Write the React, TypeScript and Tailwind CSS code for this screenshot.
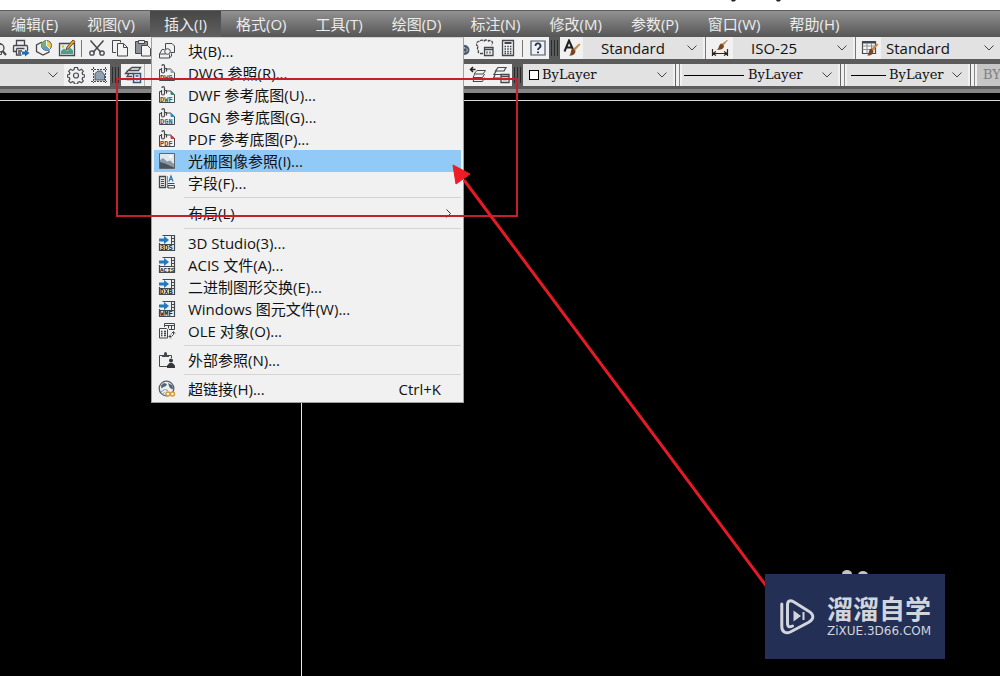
import { useState } from "react";
import type { ReactNode } from "react";

type MenuEntry = {
  label: string;
  icon?: ReactNode;
  shortcut?: string;
  submenu?: boolean;
};

const menus = [
  "编辑(E)",
  "视图(V)",
  "插入(I)",
  "格式(O)",
  "工具(T)",
  "绘图(D)",
  "标注(N)",
  "修改(M)",
  "参数(P)",
  "窗口(W)",
  "帮助(H)",
];

function Icon({ children }: { children: ReactNode }) {
  return (
    <svg width="18" height="18" viewBox="0 0 18 18" fill="none" stroke="#45484d" strokeWidth="1" className="block shrink-0" aria-hidden="true">
      {children}
    </svg>
  );
}

/* ---- menu icons ---- */

function ReferenceIcon({ tag, color, fold }: { tag: string; color: string; fold: string }) {
  return (
    <Icon>
      <path d="M3 5.500H1.500v11h15V8.500l-3.500-3.500H8.500" fill="#f4f4f4" />
      <path d="M13 5v3.500h3.500z" fill={fold} stroke={fold} />
      <path d="M3.500 4v3.500a1.500 1.500 0 0 0 3 0V2a1.300 1.300 0 0 0-2.600 0M6.500 4.500h2v3" strokeWidth="1.200" />
      <text x="2" y="15.500" fontSize="7" fontWeight="700" fontFamily="Liberation Mono, monospace" fill={color} stroke="none">
        {tag}
      </text>
    </Icon>
  );
}

function ImportIcon({ tag }: { tag: string }) {
  return (
    <Icon>
      <path d="M4.500 1.500h12v15h-15V9" fill="#eef0f2" strokeWidth="1.200" />
      <path d="M13.500 2v8M16 4.500h-2M16 7.500h-2" />
      <path d="M1 4.500h5V2l5 4-5 4V7.500H1z" fill="#2479bd" stroke="none" />
      <path d="M2 10.500h14" />
      <text x="2" y="16" fontSize={tag.length > 3 ? 6 : 7} fontWeight="700" fontFamily="Liberation Mono, monospace" fill="#222529" stroke="none">
        {tag}
      </text>
    </Icon>
  );
}

function BlockIcon() {
  return (
    <Icon>
      <path d="M7.500 7V1.500h6.500l2.500 2.500v6.500h-4" />
      <circle cx="9.500" cy="9.500" r="2.800" fill="#f2f2f2" />
      <path d="M6.500 7.500H4L1.500 12v4h10l2-2v-2.500" />
      <path d="M1.500 12h6M11.500 16v-3.500" />
    </Icon>
  );
}

function RasterIcon() {
  return (
    <Icon>
      <path d="M1.500 1.500h15v15h-15z" fill="#dfe8ef" stroke="#5b6670" />
      <path d="M2 8l3-2 4 3.500 3-1 4 3.500v4H2z" fill="#8c98a3" stroke="none" />
      <path d="M2 10l5 1.500 9 4V16H2z" fill="#4b535c" stroke="none" />
      <circle cx="12.500" cy="4.500" r="1.500" fill="#fff" stroke="none" />
    </Icon>
  );
}

function FieldIcon() {
  return (
    <Icon>
      <path d="M1.500 2.500h6v11h-6z" fill="#e4e6e8" strokeWidth="1.300" />
      <path d="M3 5.500h3M3 7.500h3M3 9.500h3M3 11.500h3" />
      <path d="M9.500 2v12" stroke="#8b9096" />
      <path d="M11 7.500L13 2l2 5.500M11.500 5.500h3" stroke="#2479bd" strokeWidth="1.200" />
      <path d="M10 9.500h6.500M10 11.500h6.500v2.500H10z" />
    </Icon>
  );
}

function OleIcon() {
  return (
    <Icon>
      <path d="M6.500 5V1.500h10v6H11M6.500 3.500h10M10.500 3.500v3M13.500 3.500v4" />
      <path d="M1.500 6.500h7l1 1v8.500h-8z" fill="#f2f2f2" />
      <path d="M3 9.500h1.500M6 9.500h2M3 11.500h1.500M6 11.500h2M3 13.500h1.500M6 13.500h2" strokeWidth="1.500" />
      <path d="M11 14.500h2.500l2-2V10M13.500 11.500l2-2 1.500 2M13 12.500l-2 2 2 2" />
    </Icon>
  );
}

function XrefIcon() {
  return (
    <Icon>
      <path d="M4 4.500H1.500v11H9M11 4.500h2.500V7" />
      <path d="M4 6V4h2V2.500a1.500 1.500 0 0 1 3 0V4h2v2z" fill="#45484d" stroke="none" />
      <circle cx="13" cy="9.500" r="2" fill="#33363a" stroke="none" />
      <path d="M9 17v-2.500l2.500-2.500h3l2.500 2.500V17z" fill="#33363a" stroke="none" />
    </Icon>
  );
}

function LinkIcon() {
  return (
    <Icon>
      <circle cx="8.500" cy="8.500" r="7.300" fill="#eceff1" stroke="#5a6068" strokeWidth="1.300" />
      <path d="M3 5.500l3-2.500 3 1-1 2-2.500 1-2 1.500zM10 3l4.500 2.500.5 4-3-1.500-1-2z" fill="#4f6472" stroke="none" />
      <path d="M3 12l3.500-2.500 3.500 1M4.500 14l2-1.500" stroke="#89939b" />
      <circle cx="10" cy="14" r="2" fill="#f2f2f2" stroke="#d49a2a" strokeWidth="1.300" />
      <circle cx="14.500" cy="14" r="2" fill="#f2f2f2" stroke="#d49a2a" strokeWidth="1.300" />
    </Icon>
  );
}

const insertGroups: MenuEntry[][] = [
  [
    { label: "块(B)...", icon: <BlockIcon /> },
    { label: "DWG 参照(R)...", icon: <ReferenceIcon tag="DWG" color="#45484d" fold="#9aa0a6" /> },
    { label: "DWF 参考底图(U)...", icon: <ReferenceIcon tag="DWF" color="#2a6a4b" fold="#3b8a63" /> },
    { label: "DGN 参考底图(G)...", icon: <ReferenceIcon tag="DGN" color="#1f5f9e" fold="#3b86c8" /> },
    { label: "PDF 参考底图(P)...", icon: <ReferenceIcon tag="PDF" color="#b3202c" fold="#c23a44" /> },
    { label: "光栅图像参照(I)...", icon: <RasterIcon /> },
    { label: "字段(F)...", icon: <FieldIcon /> },
  ],
  [{ label: "布局(L)", submenu: true }],
  [
    { label: "3D Studio(3)...", icon: <ImportIcon tag="3DS" /> },
    { label: "ACIS 文件(A)...", icon: <ImportIcon tag="ACIS" /> },
    { label: "二进制图形交换(E)...", icon: <ImportIcon tag="DXB" /> },
    { label: "Windows 图元文件(W)...", icon: <ImportIcon tag="WMF" /> },
    { label: "OLE 对象(O)...", icon: <OleIcon /> },
  ],
  [{ label: "外部参照(N)...", icon: <XrefIcon /> }],
  [{ label: "超链接(H)...", icon: <LinkIcon />, shortcut: "Ctrl+K" }],
];

/* ---- toolbar icons ---- */

const previewIcon = (
  <Icon>
    <path d="M3.500 2.500h6l3 3v10h-9z" />
    <circle cx="11" cy="9" r="4" fill="#eee" strokeWidth="1.300" />
    <path d="M13.500 12l3.500 4" strokeWidth="2" />
  </Icon>
);

const plotIcon = (
  <Icon>
    <path d="M4.500 6V1.500h8V6M2.500 6.500h12a1 1 0 0 1 1 1V12M4 12.500H1.500v-5a1 1 0 0 1 1-1" strokeWidth="1.300" />
    <path d="M4.500 9.500h8M4.500 9.500v6.500h5M6 12h4M6 14h3" strokeWidth="1.300" />
    <path d="M10 12.500h3V10.500l4.500 3.500-4.500 3.500v-2h-3z" fill="#1f6bb0" stroke="none" />
  </Icon>
);

const publishIcon = (
  <Icon>
    <path d="M7 3L1.500 6v6.500L8 16l6-3V11.500" strokeWidth="1.300" />
    <circle cx="11.500" cy="6.500" r="5" fill="#f3c94a" stroke="#5a6068" />
    <path d="M11.500 1.500v5l-4.500 2a5 5 0 0 1 4.500-7z" fill="#6fb36f" stroke="none" />
    <path d="M11.500 6.500l3.500 3.500a5 5 0 0 1-8-1.500z" fill="#5d9cd0" stroke="none" />
    <path d="M11.500 1.500v5l3.500 3.500" stroke="#fff" />
  </Icon>
);

const imageEditIcon = (
  <Icon>
    <path d="M1.500 4.500h15v12h-15z" fill="#dff0f2" strokeWidth="1.300" />
    <path d="M3 15v-3l3-2.500 3 2.500 3-3.500 3 3V15z" fill="#4f9c8a" stroke="none" />
    <circle cx="5" cy="7.500" r="1.200" fill="#e5b93c" stroke="none" />
    <path d="M8 11l1-3 6-7 2 1.500-6.500 7z" fill="#f0a93a" stroke="#6b4a1a" />
  </Icon>
);

const cutIcon = (
  <Icon>
    <path d="M2.500 1.500l10.500 12M15.500 1.500L5 13.500" strokeWidth="1.500" />
    <circle cx="4" cy="14" r="2.200" strokeWidth="1.300" />
    <circle cx="14" cy="14" r="2.200" strokeWidth="1.300" />
  </Icon>
);

const copyIcon = (
  <Icon>
    <path d="M5 13.500H1.500v-12h8V3.500" />
    <path d="M6.500 4.500h6l4 4v8.500h-10z" fill="#f4f4f4" />
    <path d="M12.500 4.500v4h4" />
  </Icon>
);

const pasteIcon = (
  <Icon>
    <path d="M1.500 2.500h12v12h-12z" fill="#8d9196" />
    <path d="M4.500 1.500h6v3h-6z" fill="#e8e8e8" />
    <path d="M7.500 6.500h6l3 3v7.500h-9z" fill="#f4f4f4" />
  </Icon>
);

const sheetIcon = (
  <Icon>
    <path d="M2 3.500h6l5 5v5l-4 2H2z" fill="#d5d8db" strokeWidth="1.300" />
    <circle cx="11.500" cy="11" r="4" strokeWidth="2" stroke="#44597a" />
    <circle cx="11.500" cy="11" r="1" fill="#44597a" />
  </Icon>
);

const markupIcon = (
  <Icon>
    <path d="M7 14.500H4.500a2 2 0 0 1-2-3 2.500 2.500 0 0 1 0-4 2.500 2.500 0 0 1 1-5 3 3 0 0 1 4.500-.500 3 3 0 0 1 4.500 0 2.500 2.500 0 0 1 3 4" strokeDasharray="3 1" strokeWidth="1.300" />
    <path d="M8.500 8.500h8.500v8h-8.500z" fill="#f4f4f4" strokeWidth="1.300" />
    <path d="M8.500 10.500h8.500M11 12.500v2M14 12.500v2" strokeWidth="1.300" />
  </Icon>
);

const calcIcon = (
  <Icon>
    <path d="M3.500 1.500h11v15h-11z" strokeWidth="1.300" />
    <path d="M5.500 4h7" strokeWidth="2" />
    <path d="M5.500 7.500h7M5.500 10h7M5.500 12.500h7M5.500 14.500h7" strokeWidth="1.300" strokeDasharray="1.500 1.200" />
  </Icon>
);

const helpIcon = (
  <Icon>
    <path d="M2 2h14v14H2z" fill="#eef1f5" stroke="#4a5566" strokeWidth="1.200" />
    <path d="M6.500 7a2.500 2.500 0 1 1 3.800 2c-.900.600-1.300 1-1.300 2M9 12.500v1.800" stroke="#28334a" strokeWidth="1.800" />
  </Icon>
);

const gearIcon = (
  <Icon>
    <path
      d="M7.500 1.500h3l.500 2.200 1.500.700 2-1.200 1.800 2-1.200 1.800.6 1.500 2 .500v2l-2 .500-.600 1.500 1.200 2-1.800 1.800-2-1.200-1.500.600-.500 2h-3l-.500-2-1.500-.600-2 1.200-1.800-1.800 1.200-2-.600-1.500-2-.500V9l2-.500.600-1.500-1.200-1.800 1.800-2 2 1.200 1.500-.700z"
      strokeWidth="1.200"
    />
    <circle cx="9" cy="9.500" r="2.500" strokeWidth="1.200" />
  </Icon>
);

const objectIcon = (
  <Icon>
    <path d="M1 3.500h16M1 15.500h16M3.500 1v16M15.500 1v16" strokeDasharray="2 1" />
    <path d="M5 14V7.500L8 5h3.500l3 4v5z" fill="#8fa1b3" stroke="#4c5a69" />
  </Icon>
);

const layerPropsIcon = (
  <Icon>
    <path d="M8 1.500h8.500l-2 3H4zM5 7.500L3 10.500h5M4 4.500l-2.500 3H9M2.500 13.500h5" strokeWidth="1.300" />
    <path d="M9.500 7.500h7v9h-7z" fill="#eef4fa" stroke="#34557a" strokeWidth="1.500" />
    <path d="M11.500 10h3M13 12v2.500" stroke="#34557a" strokeWidth="1.300" />
  </Icon>
);

const layerPrevIcon = (
  <Icon>
    <path d="M6.500 3.500H1.500M4 1L1.500 3.500 4 6" strokeWidth="1.500" stroke="#222" />
    <path d="M8 4.500h8.500l-2.500 3.500H5zM5.500 8.500L4 11.500h9.500l2-3.500M5.500 12L4 15.500h9.500l2-4" />
  </Icon>
);

const layerStateIcon = (
  <Icon>
    <path d="M6 1.500h8l-2 3.500H3.500zM4 5.500L2 8.500h7M3 9L1.500 12H8" strokeWidth="1.200" />
    <path d="M9 8.500h8v8H9z" fill="#f4f4f4" strokeWidth="1.300" />
    <path d="M9 10.500h8M11 13.500h4" strokeWidth="1.300" />
  </Icon>
);

const brush = (
  <g stroke="none">
    <path d="M17.500 5.500l-5.500 6-2-1.500 6-5.500z" fill="#c98a4b" />
    <path d="M10 9.500l2.500 2.200c0 3.300-2.500 5.300-6.500 4.800 1.800-1 1.500-2.500 2-4.500.300-1.200 1-2 2-2.500z" fill="#7a4522" />
  </g>
);

const textStyleIcon = (
  <Icon>
    <path d="M1.500 12.500L6 1.500l4 9M3.500 8.500h5" strokeWidth="2" stroke="#222" />
    {brush}
  </Icon>
);

const dimStyleIcon = (
  <Icon>
    <path d="M1.500 10v7M16.500 10v7M2 14.500h14M5 12.500l-3 2 3 2M13 12.500l3 2-3 2" stroke="#33261c" strokeWidth="1.200" />
    <path d="M17 1l-4.500 5.500-2-1.500 5.500-4z" fill="#c98a4b" stroke="none" />
    <path d="M10.500 4.500L13 6.700c0 3-3 4.600-7.500 4 2-.7 2-2.200 2.700-4 .500-1.200 1.300-1.900 2.300-2.200z" fill="#7a4522" stroke="none" />
  </Icon>
);

const tableStyleIcon = (
  <Icon>
    <path d="M1.500 2.500h13v12h-13z" fill="#f7f7f7" strokeWidth="1.200" />
    <path d="M1.500 3.500h13" strokeWidth="2" />
    <path d="M1.500 7h13M1.500 10.500h13M6 4v10.500M10.500 4v10.500" stroke="#8b9096" />
    {brush}
  </Icon>
);

function ToolButton({ label, children }: { label: string; children: ReactNode }) {
  return (
    <button type="button" aria-label={label} className="flex h-full w-[23px] shrink-0 items-center justify-center hover:bg-[#cfe4f7]">
      {children}
    </button>
  );
}

function Divider() {
  return <span className="mx-[3px] h-[17px] w-px shrink-0 bg-[#777]" />;
}

function Grip() {
  return (
    <span className="flex w-[11px] shrink-0 items-center justify-center gap-[2px]">
      <span className="h-4 w-px bg-[#2c2c2c]" />
      <span className="h-4 w-px bg-[#2c2c2c]" />
      <span className="h-4 w-px bg-[#2c2c2c]" />
    </span>
  );
}

function LightGrip() {
  return (
    <span className="flex w-[9px] shrink-0 items-center justify-center gap-[3px] bg-[#f1f1f1]">
      <span className="h-full w-px bg-[#666]" />
      <span className="h-full w-px bg-[#888]" />
    </span>
  );
}

function Combo({ label, value, className, children }: { label: string; value: string; className: string; children?: ReactNode }) {
  return (
    <label className="relative flex h-full shrink-0 items-center bg-[#e2e2e2]">
      {children}
      <select aria-label={label} defaultValue={value} className={`h-full appearance-none bg-transparent text-[#111] outline-none ${className}`}>
        <option>{value}</option>
      </select>
      <svg width="10" height="6" viewBox="0 0 10 6" fill="none" stroke="#444" className="pointer-events-none absolute right-[6px]" aria-hidden="true">
        <path d="M.5.500L5 5 9.500.500" />
      </svg>
    </label>
  );
}

function InsertMenu() {
  const [active, setActive] = useState("光栅图像参照(I)...");

  return (
    <div className="absolute left-px top-full z-20 w-[313px] border border-[#a0a0a0] border-t-[#d0d0d0] bg-[#f1f1f1] px-[2px] py-[2px] text-[#111]">
      {insertGroups.map((group, index) => (
        <div key={index}>
          {index > 0 && <div className="my-[3px] ml-[30px] h-px bg-[#d4d4d4]" />}
          {group.map((entry) => (
            <button
              key={entry.label}
              type="button"
              onMouseEnter={() => setActive(entry.label)}
              className={`flex w-full items-center whitespace-nowrap pl-1 pr-[10px] text-left ${entry.submenu ? "h-6" : "h-[22px]"} ${
                active === entry.label ? "bg-[#91c9f7]" : ""
              }`}
            >
              <span className="w-[30px] shrink-0">{entry.icon}</span>
              <span className="flex-1">{entry.label}</span>
              {entry.shortcut && <span className="pr-[10px]">{entry.shortcut}</span>}
              {entry.submenu && (
                <svg width="5" height="9" viewBox="0 0 5 9" fill="none" stroke="#333" aria-hidden="true">
                  <path d="M.5.500l4 4-4 4" />
                </svg>
              )}
            </button>
          ))}
        </div>
      ))}
    </div>
  );
}

function MenuBar() {
  const [open, setOpen] = useState("插入(I)");

  return (
    <nav className="flex h-[27px] border-t border-[#5c5c5c] bg-gradient-to-b from-[#929292] to-[#565656] text-[#ececec]">
      <div className="-ml-[3px] flex gap-px">
        {menus.map((menu) => (
          <div key={menu} className="relative shrink-0">
            <button
              type="button"
              onClick={() => setOpen(menu)}
              className={`h-full whitespace-nowrap px-[14px] ${open === menu ? "bg-gradient-to-b from-[#474747] to-[#606060]" : ""}`}
            >
              {menu}
            </button>
            {menu === "插入(I)" && open === menu && <InsertMenu />}
          </div>
        ))}
      </div>
    </nav>
  );
}

function StandardToolbar() {
  return (
    <div className="flex h-[22px]">
      <div className="flex w-[549px] shrink-0 items-center justify-between bg-[#f1f1f1]">
        <div className="-ml-[14px] flex h-full items-center">
          <ToolButton label="打印预览">{previewIcon}</ToolButton>
          <ToolButton label="打印">{plotIcon}</ToolButton>
          <ToolButton label="发布">{publishIcon}</ToolButton>
          <ToolButton label="编辑图像">{imageEditIcon}</ToolButton>
          <Divider />
          <ToolButton label="剪切">{cutIcon}</ToolButton>
          <ToolButton label="复制">{copyIcon}</ToolButton>
          <ToolButton label="粘贴">{pasteIcon}</ToolButton>
        </div>
        <div className="flex h-full items-center">
          <ToolButton label="图纸集">{sheetIcon}</ToolButton>
          <ToolButton label="标记集">{markupIcon}</ToolButton>
          <ToolButton label="计算器">{calcIcon}</ToolButton>
          <Divider />
          <ToolButton label="帮助">{helpIcon}</ToolButton>
        </div>
      </div>
      <Grip />
      <div className="flex shrink-0 bg-[#f1f1f1]">
        <ToolButton label="文字样式">{textStyleIcon}</ToolButton>
        <Combo label="文字样式" value="Standard" className="w-[120px] pl-[18px]" />
        <span className="mx-[2px] w-px bg-[#777]" />
        <ToolButton label="标注样式">{dimStyleIcon}</ToolButton>
        <span className="w-[2px]" />
        <Combo label="标注样式" value="ISO-25" className="w-[120px] pl-[18px]" />
        <span className="mx-[2px] w-px bg-[#777]" />
        <ToolButton label="表格样式">{tableStyleIcon}</ToolButton>
      </div>
      <Combo label="表格样式" value="Standard" className="w-[119px] pl-[5px]" />
      <span className="flex-1 bg-[#e2e2e2]" />
    </div>
  );
}

function LayerToolbar() {
  return (
    <div className="flex h-[22px] font-['DejaVu_Serif',serif] text-[13px]">
      <Combo label="工作空间" value="" className="w-[64px]" />
      <div className="flex shrink-0 bg-[#f1f1f1]">
        <ToolButton label="工作空间设置">{gearIcon}</ToolButton>
        <ToolButton label="对象选择">{objectIcon}</ToolButton>
      </div>
      <Grip />
      <div className="flex w-[391px] shrink-0 items-center justify-between bg-[#f1f1f1]">
        <div className="flex h-full items-center">
          <ToolButton label="图层特性">{layerPropsIcon}</ToolButton>
          <span className="h-full w-px bg-[#b5b5b5]" />
        </div>
        <div className="flex h-full">
          <ToolButton label="上一个图层">{layerPrevIcon}</ToolButton>
          <ToolButton label="图层状态">{layerStateIcon}</ToolButton>
        </div>
      </div>
      <Grip />
      <Combo label="颜色" value="ByLayer" className="w-[150px] pl-[19px]">
        <span className="pointer-events-none absolute left-[6px] size-[10px] border border-black bg-white" />
      </Combo>
      <LightGrip />
      <Combo label="线型" value="ByLayer" className="w-[156px] pl-[66px]">
        <span className="pointer-events-none absolute left-[2px] h-px w-[60px] bg-black" />
      </Combo>
      <LightGrip />
      <Combo label="线宽" value="ByLayer" className="w-[121px] pl-[42px]">
        <span className="pointer-events-none absolute left-[4px] h-px w-[35px] bg-black" />
      </Combo>
      <LightGrip />
      <span className="flex flex-1 items-center overflow-hidden whitespace-nowrap bg-[#c6c6c6] pl-[6px] text-[#808080]">BY</span>
    </div>
  );
}

function Annotation() {
  return (
    <svg width="780" height="600" viewBox="0 0 780 600" fill="none" className="pointer-events-none absolute left-0 top-0 z-30" aria-hidden="true">
      <path d="M117 79h400v137H117z" stroke="#c41f2d" strokeWidth="2" />
      <path d="M464 180l303 407" stroke="#e41b25" strokeWidth="3" />
      <path d="M453 165l17 9-14 10z" fill="#ee1c25" stroke="#ee1c25" />
    </svg>
  );
}

function Watermark() {
  return (
    <div className="absolute left-[765px] top-[574px] z-40 flex h-[85px] w-[180px] items-center gap-[12px] bg-[#232f55] pl-[15px] text-[#d3d5dc]">
      <svg width="35" height="37" viewBox="0 0 35 37" fill="none" stroke="currentColor" strokeWidth="3" className="shrink-0" aria-hidden="true">
        <path d="M1.800 6v22.500c0 5.500 4 7.500 8.500 5.500l18-9.500c6-3.500 6-8 0-11.500L14 4C9.500 1.500 7.500 3 7.500 7v18c0 4 2 4.500 5 3" strokeLinecap="round" />
        <path d="M13.500 12.500l7.500 5.500-7.500 5.500z" fill="currentColor" stroke="none" />
        <path d="M23.500 14v8" strokeWidth="2" />
      </svg>
      <div className="whitespace-nowrap pb-[6px]">
        <div className="font-['Noto_Sans_CJK_SC',sans-serif] text-[26px] font-bold leading-[34px]">溜溜自学</div>
        <div className="font-['DejaVu_Sans',sans-serif] text-[12px] leading-[12px]">ZiXUE.3D66.COM</div>
      </div>
    </div>
  );
}

export default function App() {
  return (
    <div className="relative flex min-h-screen w-full flex-col overflow-hidden bg-[#5b5b5b] font-['Open_Sans','Noto_Sans_CJK_SC',sans-serif] text-[15px] leading-[20px]">
      <header className="h-[10px] bg-white">
        <svg width="60" height="4" viewBox="0 0 60 4" fill="#222" className="ml-[731px]" aria-hidden="true">
          <path d="M0 0h5L3.500 1.500H1zM45 0h5l-1.500 1.500H46z" />
        </svg>
      </header>
      <MenuBar />
      <div className="flex flex-col gap-[5px] pb-[3px]">
        <StandardToolbar />
        <LayerToolbar />
      </div>
      <div className="h-1 bg-[#858585]" />
      <main className="flex flex-1 flex-col bg-black pt-[7px]">
        <div className="flex flex-1 border-t border-[#d8d8d8]">
          <div className="ml-[301px] w-px bg-[#e8e8e8]" />
        </div>
      </main>
      <svg width="30" height="12" viewBox="0 0 30 12" fill="#c4c4c4" className="absolute left-[840px] top-[568px]" aria-hidden="true">
        <ellipse cx="7" cy="6" rx="5" ry="4" />
        <ellipse cx="23" cy="7" rx="5" ry="4" />
      </svg>
      <Annotation />
      <Watermark />
    </div>
  );
}
